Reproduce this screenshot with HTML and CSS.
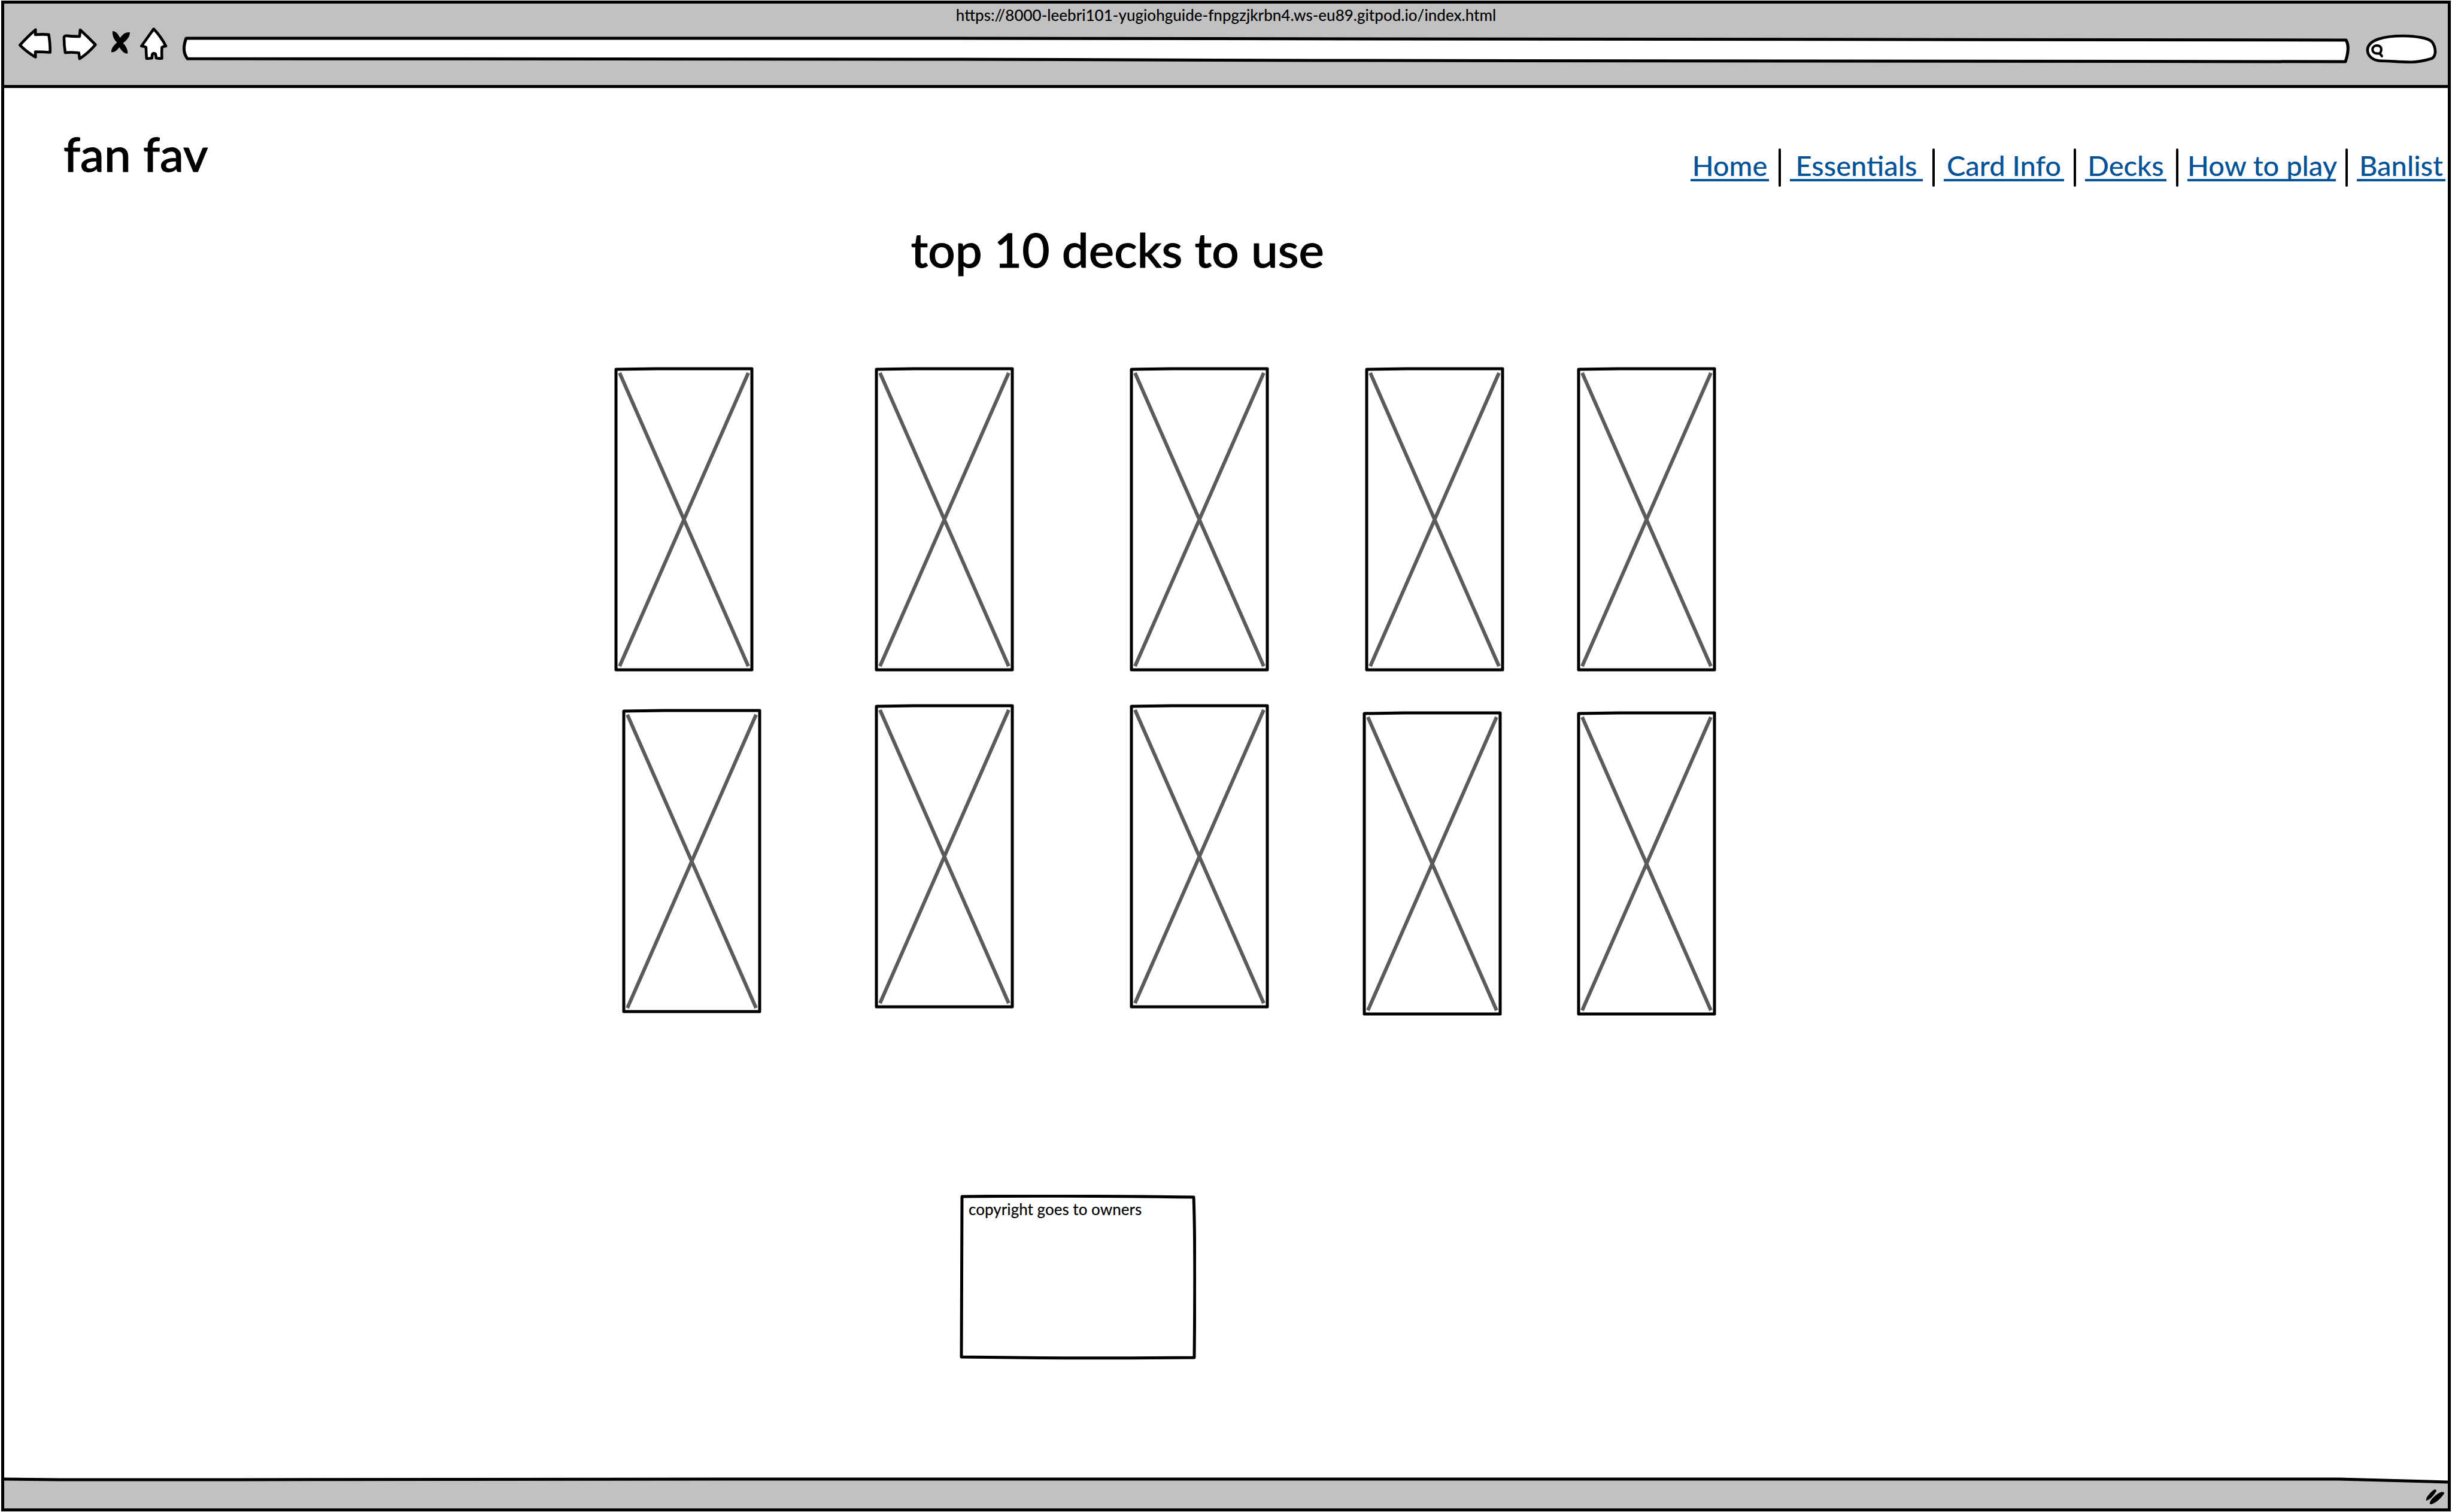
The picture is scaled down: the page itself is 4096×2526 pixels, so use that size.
FILE: index.html
```html
<!DOCTYPE html>
<html lang="en">
<head>
<meta charset="utf-8">
<title>fan fav</title>
<link rel="stylesheet" href="styles.css">
</head>
<body>
<div class="window">
  <header class="chrome">
    <p class="address">https://8000-leebri101-yugiohguide-fnpgzjkrbn4.ws-eu89.gitpod.io/index.html</p>
    <div class="toolbar">
      <button class="tool" type="button" aria-label="Back">
        <svg width="58" height="62" viewBox="90 135 176 188"><path class="ink paper" d="M179 149 Q140 182 100 227 Q132 260 179 288 L178 261 Q215 261 253 264 Q254 222 246 174 Q215 171 178 174 Z"/></svg>
      </button>
      <button class="tool" type="button" aria-label="Forward">
        <svg width="59" height="62" viewBox="312 135 179 188"><path class="ink paper" d="M406 150 Q444 184 483 225 Q446 268 403 296 L399 266 Q365 262 330 265 Q324 225 324 188 Q326 178 340 180 Q370 184 403 183 Z"/></svg>
      </button>
      <button class="tool" type="button" aria-label="Stop">
        <svg width="41" height="62" viewBox="537 135 125 188"><path d="M570 156 Q590 153 609 190 Q630 158 659 162 Q660 190 624 217 Q648 240 648 270 Q628 274 605 238 Q585 266 564 263 Q562 240 593 214 Q568 190 570 156 Z"/></svg>
      </button>
      <button class="tool" type="button" aria-label="Home">
        <svg width="55" height="62" viewBox="708 135 167 188"><path class="ink paper" d="M780 145 Q752 185 718 232 Q730 232 741 238 Q742 270 744 295 Q758 296 771 293 Q771 280 774 272 Q781 266 789 272 Q792 282 793 293 Q808 296 822 294 Q820 265 822 238 Q832 232 842 232 Q818 185 780 145 Z"/></svg>
      </button>
      <label class="field field-url">
        <svg class="outline" viewBox="0 0 3624 50" preserveAspectRatio="none"><path class="line paper" d="M8 7 H1300 L3617 10 Q3624 22 3616 46 L1900 44 L1300 42 L10 41 Q0 28 8 7 Z"/></svg>
        <input class="entry" type="text" aria-label="Address">
      </label>
      <label class="field field-search">
        <svg class="outline" viewBox="430 170 407 152"><path class="ink paper" d="M545 306 C500 306 472 282 472 250 C474 200 550 179 655 179 C720 180 780 190 798 208 C812 224 816 245 816 262 Q814 284 800 293 Q740 312 690 312 C630 312 590 306 545 306 Z"/><path class="ink lens" d="M534 268 Q522 270 508 266 Q494 256 498 242 Q504 228 522 228 Q540 230 542 246 Q542 260 534 268 L545 282"/></svg>
        <input class="entry" type="search" aria-label="Search">
      </label>
    </div>
  </header>

  <main class="page">
    <div class="masthead">
      <h1 class="title">fan fav</h1>
      <nav class="menu" aria-label="Main">
        <a href="#home" class="w-home">Home</a>
        <a href="#essentials" class="w-essentials">Essentials</a>
        <a href="#card-info" class="w-card">Card Info</a>
        <a href="#decks" class="w-decks">Decks</a>
        <a href="#how-to-play" class="w-play">How to play</a>
        <a href="#banlist" class="w-banlist">Banlist</a>
      </nav>
    </div>
    <h2 class="title subtitle">top 10 decks to use</h2>
    <section class="decks" aria-label="Decks">
      <div class="row row-first">
        <svg class="deck" viewBox="0 0 233 509"><use href="#placeholder"/></svg>
        <svg class="deck" viewBox="0 0 233 509"><use href="#placeholder"/></svg>
        <svg class="deck" viewBox="0 0 233 509"><use href="#placeholder"/></svg>
        <svg class="deck" viewBox="0 0 233 509"><use href="#placeholder"/></svg>
        <svg class="deck" viewBox="0 0 233 509"><use href="#placeholder"/></svg>
      </div>
      <div class="row row-second">
        <svg class="deck low" viewBox="0 0 233 509"><use href="#placeholder"/></svg>
        <svg class="deck" viewBox="0 0 233 509"><use href="#placeholder"/></svg>
        <svg class="deck" viewBox="0 0 233 509"><use href="#placeholder"/></svg>
        <svg class="deck lower" viewBox="0 0 233 509"><use href="#placeholder"/></svg>
        <svg class="deck lower" viewBox="0 0 233 509"><use href="#placeholder"/></svg>
      </div>
    </section>
    <aside class="note">
      <svg class="outline" viewBox="0 0 395 276" preserveAspectRatio="none"><path class="line paper" d="M4 3 Q150 1 391 4 Q394 80 392 272 Q220 274 3 271 Q3 150 4 3 Z"/></svg>
      <p class="note-text">copyright goes to owners</p>
    </aside>
  </main>

  <footer class="status">
    <svg class="outline" viewBox="0 0 4082 52" preserveAspectRatio="none"><path class="bar" d="M0 3 L90 4 H400 L1200 3 H3900 L4082 8 V52 H0 Z"/><path class="line" d="M0 3 L90 4 H400 L1200 3 H3900 L4082 8"/></svg>
    <svg class="grip" width="32" height="26" viewBox="770 204 97 79"><path d="M772 262 Q770 250 782 236 Q800 212 816 205 Q826 206 824 214 Q806 244 785 257 Z"/><path d="M792 280 Q788 266 804 250 Q828 226 850 218 Q864 217 865 224 Q846 254 820 270 Q804 280 792 280 Z"/></svg>
  </footer>
</div>

<svg class="defs" width="0" height="0" aria-hidden="true">
  <symbol id="placeholder" viewBox="0 0 233 509">
    <path class="cross" d="M9 10 L224 500 M224 10 L9 500"/>
    <path class="line" d="M3 4 L70 3 H230 V506 H3 Z"/>
  </symbol>
</svg>
</body>
</html>
```
FILE: styles.css
```css
* { box-sizing: border-box; }

body {
  margin: 0;
  background: #fff;
  color: #000;
  font-family: Lato, "Open Sans", sans-serif;
  font-weight: 500;
}

.window {
  display: flex;
  flex-direction: column;
  min-height: calc(100vh - 2px);
  margin: 1px 2px;
  border: 5px solid #000;
}

.chrome {
  height: 141px;
  border-bottom: 5px solid #000;
  background: #c1c1c1;
}

.address {
  margin: 0;
  font-size: 26px;
  line-height: 39px;
  text-align: center;
}

.toolbar {
  display: flex;
  align-items: flex-end;
  gap: 15px;
  padding: 0 14px 0 23px;
}

.tool {
  padding: 0;
  border: 0;
  background: none;
}

svg { display: block; }

.ink {
  fill: none;
  stroke: #000;
  stroke-width: 14;
  stroke-linejoin: round;
  stroke-linecap: round;
}

.line {
  fill: none;
  stroke: #000;
  stroke-width: 5;
  stroke-linejoin: round;
}

.paper { fill: #fff; }
.lens { stroke-width: 12; }

.field {
  display: grid;
  height: 50px;
}

.field-url { flex: 1; }
.field-search { width: 134px; }

.outline,
.entry,
.note-text { grid-area: 1 / 1; }

.outline {
  width: 100%;
  height: 100%;
  min-height: 0;
}

.entry {
  width: 100%;
  min-width: 0;
  padding: 0 40px;
  border: 0;
  background: none;
  font: inherit;
  font-size: 26px;
}

.page { flex: 1; }

.masthead {
  display: flex;
  justify-content: space-between;
  align-items: flex-start;
  padding: 60px 4px 0 99px;
}

.title {
  margin: 0;
  font-size: 80px;
  font-weight: 500;
  line-height: 98px;
  -webkit-text-stroke: 1px #000;
}

.menu {
  display: flex;
  margin-top: 41px;
  font-size: 47px;
}

.menu a {
  position: relative;
  height: 55px;
  border-bottom: 4px solid #045396;
  color: #045396;
  line-height: 56px;
  text-align: center;
  text-decoration: none;
  white-space: nowrap;
}

.menu a + a { margin-left: 35px; }

.menu a + a::before {
  content: "";
  position: absolute;
  left: -19px;
  top: 0;
  width: 4px;
  height: 64px;
  border-radius: 2px;
  background: #000;
}

.w-home { width: 131px; }
.w-essentials { width: 222px; }
.w-card { width: 201px; }
.w-decks { width: 136px; }
.w-play { width: 248px; }
.w-banlist { width: 148px; }

.subtitle {
  margin-top: 62px;
  padding-left: 37.1%;
}

.decks { padding-top: 148px; }

.row {
  display: grid;
  align-items: start;
}

.row-first { grid-template-columns: 1019fr 435fr 426fr 393fr 354fr 1455fr; }
.row-second { grid-template-columns: 1032fr 422fr 426fr 389fr 358fr 1455fr; }
.row .deck:first-child { grid-column: 2; }
.row-second { margin-top: 54px; }

.deck {
  width: 233px;
  height: 509px;
}

.low { margin-top: 8px; }
.lower { margin-top: 12px; }

.cross {
  fill: none;
  stroke: #5b5b5b;
  stroke-width: 6;
}

.note {
  display: grid;
  width: 395px;
  height: 276px;
  margin: 299px 0 0 39.1%;
}

.note-text {
  margin: 0;
  padding: 8px 15px;
  font-size: 26px;
  line-height: 32px;
}

.status {
  display: grid;
  height: 52px;
}

.bar { fill: #c1c1c1; }

.grip {
  grid-area: 1 / 1;
  place-self: end;
  margin: 0 5px 6px 0;
}

.defs { position: absolute; }
```
